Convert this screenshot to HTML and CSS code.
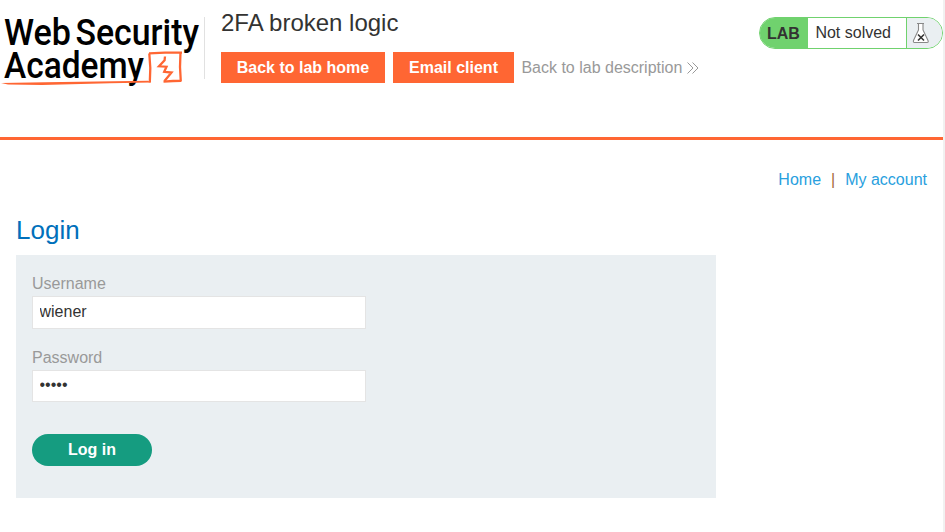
FILE: index.html
```html
<!DOCTYPE html>
<html lang="en">
<head>
<meta charset="utf-8">
<title>2FA broken logic</title>
<link rel="stylesheet" href="styles.css">
</head>
<body>
<div class="page">
  <header class="lab-header">
    <svg class="logo" width="204" height="92" viewBox="0 0 204 92">
      <g class="logo-text">
        <text x="4" y="45.3" textLength="67" lengthAdjust="spacingAndGlyphs">Web</text>
        <text x="75.5" y="45.3" textLength="123.5" lengthAdjust="spacingAndGlyphs">Security</text>
        <text x="4" y="78" textLength="140" lengthAdjust="spacingAndGlyphs">Academy</text>
      </g>
      <path class="logo-base" d="M1 83 L45 82.3 L148 80.8 L151 82.6 L110 83.3 L42 85 L8 84.6Z"/>
      <path class="logo-box" d="M149.8 82.5 L150.3 68 L149.3 53.5 M149 53.4 L165 52.6 L182 52.7 M180.5 52 L180 67 L180.8 81.5 M163.5 81.7 L173 81 L181 80.8"/>
      <path class="logo-bolt" d="M165 56.5 L164.6 60.2 L159 66.3 L166.5 66.7 L164.2 71.8 L171.5 72.5 L164.5 81"/>
    </svg>
    <div class="header-main">
      <h2 class="lab-title">2FA broken logic</h2>
      <div class="actions">
        <a class="button">Back to lab home</a>
        <a class="button button-email">Email client</a>
        <a class="back-link">Back to lab description
          <svg width="12" height="12" viewBox="0 0 12 12"><path d="M.5.5 6 6 .5 11.5M5.5.5 11 6 5.5 11.5"/></svg>
        </a>
      </div>
    </div>
    <div class="status">
      <span class="status-tag">LAB</span>
      <span class="status-text">Not solved</span>
      <span class="status-icon">
        <svg width="18" height="22" viewBox="0 0 18 22">
          <path class="flask" d="M5 1.5H12M6.5 2V8L1.5 18.5Q1 20.5 2.5 20.5H15Q16.8 20.5 16 18.5L11 8V2"/>
          <path class="cross" d="m6 12.5 6 6m0-6-6 6"/>
        </svg>
      </span>
    </div>
  </header>
  <nav class="nav"><a>Home</a><span class="divider">|</span><a>My account</a></nav>
  <main>
    <h1>Login</h1>
    <form class="login">
      <label for="user">Username</label>
      <input id="user" class="user" type="text" value="wiener">
      <label for="pass">Password</label>
      <input id="pass" class="pass" type="password" value="peter">
      <button type="button">Log in</button>
    </form>
  </main>
</div>
</body>
</html>
```
FILE: styles.css
```css
* { box-sizing: border-box; }
body { margin: 0; background: #f1f1f1; color: #333332; font: 16px/18px "Liberation Sans", Arial, sans-serif; }
.page { width: 943px; height: 532px; background: #fff; overflow: hidden; }
.lab-header { display: flex; align-items: flex-start; height: 140px; border-bottom: 3px solid #ff6633; }
.logo { flex: none; }
.logo-text { font: 500 37.5px Roboto, sans-serif; fill: #000; }
.logo-base { fill: #ff6633; }
.logo-box, .logo-bolt { fill: none; stroke: #ff6633; stroke-width: 2.3; }
.header-main { flex: 1; height: 62px; margin-top: 17px; padding-left: 16px; border-left: 1px solid #e1e1e1; }
.lab-title { margin: -8px 0 0; font-size: 24px; line-height: 28px; font-weight: 400; }
.actions { display: flex; margin-top: 15px; height: 31px; }
.button { width: 164px; line-height: 31px; background: #ff6633; color: #fff; font-weight: 700; text-align: center; }
.button-email { width: 121px; margin-left: 8px; }
.back-link { display: flex; align-items: center; gap: 4.5px; margin-left: 7.4px; line-height: 31px; color: #999; white-space: nowrap; }
.back-link svg { fill: none; stroke: #999; }
.status { display: flex; width: 184px; height: 32px; margin-top: 17px; border: 1px solid #70d26e; border-radius: 16px; overflow: hidden; line-height: 31px; }
.status-tag { width: 48px; padding-left: 7px; background: #70d26e; font-weight: 700; }
.status-text { width: 98px; padding-left: 7.4px; line-height: 29px; white-space: nowrap; }
.status-icon { flex: 1; padding: 4px 0 0 5px; border-left: 1px solid #70d26e; background: #eaeff2; line-height: 0; }
.flask { fill: #fff; stroke: #888; stroke-width: 1.1; }
.cross { fill: none; stroke: #333332; stroke-width: 1.6; }
.nav { display: flex; justify-content: flex-end; padding: 31px 16px 0 0; color: #29a0de; }
.divider { margin: 0 10px; color: #a56a39; }
main { padding: 26px 16px 0; }
h1 { margin: 0; font-size: 26px; line-height: 30px; font-weight: 400; color: #0070bb; }
.login { display: flex; flex-direction: column; align-items: flex-start; width: 700px; height: 243px; margin-top: 10px; padding: 20px 16px 0; background: #eaeff2; }
label { color: #999; line-height: 18px; }
input { width: 334px; padding: 0 7px 2px 6.5px; border: 1px solid #e4e4e4; background: #fff; color: #333332; font: inherit; outline: none; }
.user { height: 33px; margin: 3px 0 20px; }
.pass { height: 32px; margin-top: 3px; }
button { width: 120px; height: 32px; margin-top: 32px; padding: 0 0 2px; border: 0; border-radius: 16px; background: #159c80; color: #fff; font: 700 16px/32px "Liberation Sans", Arial, sans-serif; }
```
